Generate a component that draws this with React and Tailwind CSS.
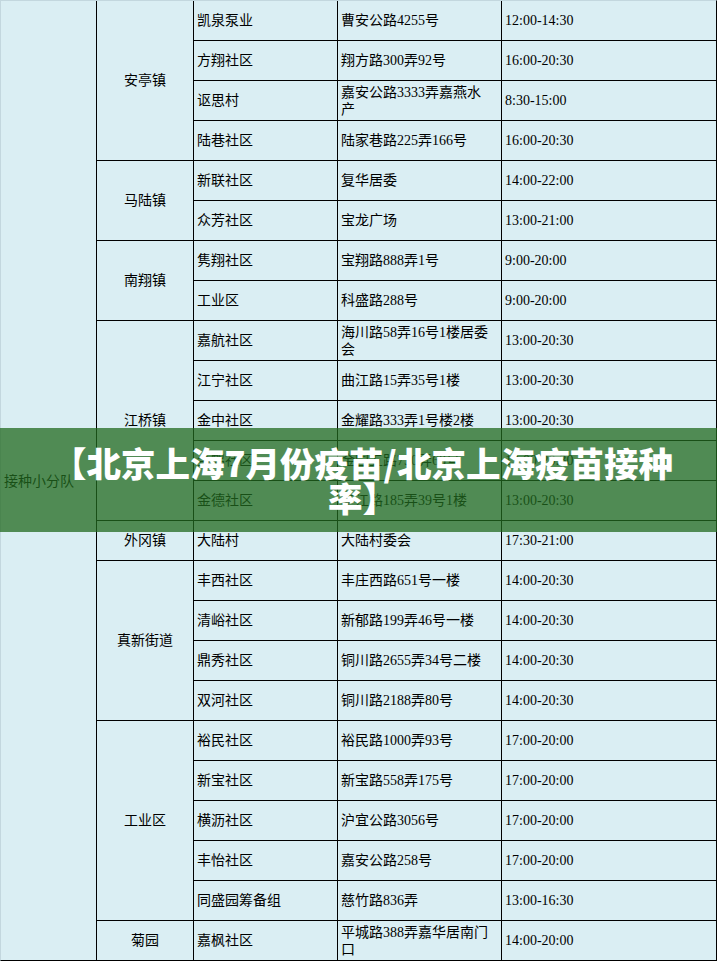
import React from "react";

const groups = [
  { town: "安亭镇", rows: [
    ["凯泉泵业", "曹安公路4255号", "12:00-14:30"],
    ["方翔社区", "翔方路300弄92号", "16:00-20:30"],
    ["讴思村", ["嘉安公路3333弄嘉燕水", "产"], "8:30-15:00"],
    ["陆巷社区", "陆家巷路225弄166号", "16:00-20:30"],
  ]},
  { town: "马陆镇", rows: [
    ["新联社区", "复华居委", "14:00-22:00"],
    ["众芳社区", "宝龙广场", "13:00-21:00"],
  ]},
  { town: "南翔镇", rows: [
    ["隽翔社区", "宝翔路888弄1号", "9:00-20:00"],
    ["工业区", "科盛路288号", "9:00-20:00"],
  ]},
  { town: "江桥镇", rows: [
    ["嘉航社区", ["海川路58弄16号1楼居委", "会"], "13:00-20:30"],
    ["江宁社区", "曲江路15弄35号1楼", "13:00-20:30"],
    ["金中社区", "金耀路333弄1号楼2楼", "13:00-20:30"],
    ["金鹤社区", "金园五路750弄68号", "13:00-20:30"],
    ["金德社区", "华江路185弄39号1楼", "13:00-20:30"],
  ]},
  { town: "外冈镇", rows: [
    ["大陆村", "大陆村委会", "17:30-21:00"],
  ]},
  { town: "真新街道", rows: [
    ["丰西社区", "丰庄西路651号一楼", "14:00-20:30"],
    ["清峪社区", "新郁路199弄46号一楼", "14:00-20:30"],
    ["鼎秀社区", "铜川路2655弄34号二楼", "14:00-20:30"],
    ["双河社区", "铜川路2188弄80号", "14:00-20:30"],
  ]},
  { town: "工业区", rows: [
    ["裕民社区", "裕民路1000弄93号", "17:00-20:00"],
    ["新宝社区", "新宝路558弄175号", "17:00-20:00"],
    ["横沥社区", "沪宜公路3056号", "17:00-20:00"],
    ["丰怡社区", "嘉安公路258号", "17:00-20:00"],
    ["同盛园筹备组", "慈竹路836弄", "13:00-16:30"],
  ]},
  { town: "菊园", rows: [
    ["嘉枫社区", ["平城路388弄嘉华居南门", "口"], "14:00-20:00"],
  ]},
];

const spanClass = {
  1: "row-span-1",
  2: "row-span-2",
  4: "row-span-4",
  5: "row-span-5",
};

function Cell({ first, children, className = "" }) {
  return (
    <div
      className={
        "flex items-center border-l border-black overflow-hidden " +
        (first ? "" : "border-t ") +
        className
      }
    >
      {children}
    </div>
  );
}

export default function App() {
  let rowIndex = 0;
  const cells = [];
  groups.forEach((g, gi) => {
    const firstRowOfGroup = rowIndex === 0;
    cells.push(
      <Cell
        key={"g" + gi}
        first={firstRowOfGroup}
        className={spanClass[g.rows.length] + " justify-center text-center"}
      >
        {g.town}
      </Cell>
    );
    g.rows.forEach((r, ri) => {
      const first = rowIndex === 0;
      cells.push(
        <Cell key={`n${gi}-${ri}`} first={first} className="pl-[3px]">
          {r[0]}
        </Cell>
      );
      cells.push(
        <Cell key={`a${gi}-${ri}`} first={first} className="pl-[3px]">
          {Array.isArray(r[1]) ? (
            <span className="leading-[17px] pt-[1px]">
              {r[1][0]}
              <br />
              {r[1][1]}
            </span>
          ) : (
            r[1]
          )}
        </Cell>
      );
      cells.push(
        <Cell key={`t${gi}-${ri}`} first={first} className="pl-[3px]">
          {r[2]}
        </Cell>
      );
      rowIndex++;
    });
  });

  return (
    <div className="relative w-[717px] h-[961px] overflow-hidden bg-[#daeef3]">
      <div
        className="grid w-[717px] h-[961px] grid-cols-[95px_97px_144px_164px_215px] grid-rows-[39px_repeat(23,40px)] border-l border-t border-l-[#c3d7de] border-t-[#c3d7de] border-r border-b border-r-black border-b-black text-[14px] text-black whitespace-nowrap"
        style={{ fontFamily: '"Liberation Serif", "Noto Sans CJK SC", serif' }}
      >
        <div className="row-span-24 flex items-center pl-[3px] pt-[1px]">接种小分队</div>
        {cells}
      </div>

      <div className="absolute left-0 right-0 top-[428px] h-[104px] bg-[rgba(33,105,31,0.75)] flex items-center justify-center">
        <div
          className="text-white font-black text-[34.5px] leading-[35px] text-center whitespace-nowrap pl-[8px]"
          style={{ fontFamily: '"Noto Sans CJK SC", "Noto Sans", sans-serif' }}
        >
          【北京上海7月份疫苗/北京上海疫苗接种
          <br />
          率】
        </div>
      </div>
    </div>
  );
}
